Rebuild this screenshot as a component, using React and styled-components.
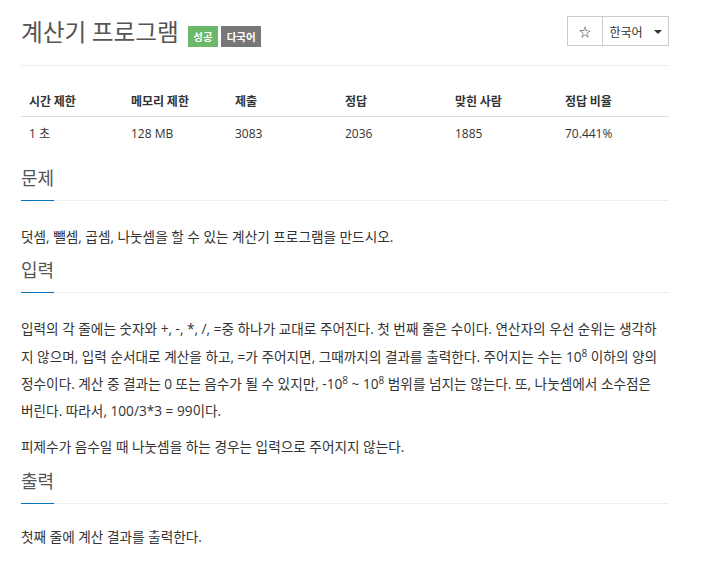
import React from "react";
import styled, { createGlobalStyle } from "styled-components";

const Global = createGlobalStyle`
  html, body { margin: 0; padding: 0; background: #fff; }
  body {
    font-family: "Open Sans", "Noto Sans CJK KR", sans-serif;
    color: #333;
    -webkit-font-smoothing: antialiased;
  }
`;

const Page = styled.div`
  width: 648px;
  padding: 0 0 0 21px;
`;

const Header = styled.header`
  display: flex;
  align-items: center;
  justify-content: space-between;
  height: 30px;
  padding: 16px 0 19px;
  border-bottom: 1px solid #eee;
`;

const TitleRow = styled.div`
  display: flex;
  align-items: center;
  gap: 3px;
`;

const Title = styled.h1`
  margin: 0 6px 0 0;
  font-family: "Noto Sans CJK KR", sans-serif;
  font-size: 23.7px;
  font-weight: 400;
  line-height: 30px;
  color: #555;
`;

const Badge = styled.span`
  display: inline-flex;
  align-items: center;
  box-sizing: border-box;
  height: 21px;
  margin-top: 11px;
  padding: 0 5.5px;
  font-family: "Noto Sans CJK KR", sans-serif;
  font-size: 10.5px;
  font-weight: 700;
  color: #fff;
  background: ${(p) => (p.$tone === "success" ? "#6ab86a" : "#777")};
`;

const BtnGroup = styled.div`
  display: flex;
  height: 30px;
`;

const Btn = styled.button`
  display: flex;
  align-items: center;
  justify-content: center;
  gap: 11px;
  box-sizing: border-box;
  width: ${(p) => p.$w}px;
  height: 30px;
  margin-left: -1px;
  padding: 0;
  border: 1px solid #ccc;
  background: #fff;
  font-family: "Noto Sans CJK KR", sans-serif;
  font-size: 12px;
  color: #333;
`;

const Caret = styled.span`
  width: 0;
  height: 0;
  border-left: 4px solid transparent;
  border-right: 4px solid transparent;
  border-top: 4px solid #333;
  margin-top: 1px;
`;

const Table = styled.table`
  width: 648px;
  margin: 17px 0 17px;
  border-collapse: collapse;
  table-layout: fixed;
  font-size: 12px;
  line-height: 17px;
`;

const Th = styled.th`
  box-sizing: border-box;
  width: ${(p) => p.$w}px;
  padding: 9px 8px 7px;
  text-align: left;
  font-family: "Noto Sans CJK KR", sans-serif;
  font-weight: 700;
  color: #333;
  border-bottom: 1px solid #ddd;
`;

const Td = styled.td`
  padding: 8px 8px;
  color: #333;
`;

const Section = styled.section`
  margin: 0;
`;

const Headline = styled.div`
  border-bottom: 1px dotted #ddd;
  margin-bottom: ${(p) => p.$gap || 22}px;
`;

const H2 = styled.h2`
  display: inline-block;
  margin: 0 0 -1px;
  padding: 0 0 13px;
  font-family: "Noto Sans CJK KR", sans-serif;
  font-size: 18px;
  font-weight: 400;
  line-height: 20px;
  color: #555;
  border-bottom: 1px solid #0076c0;
`;

const P = styled.p`
  margin: 0 0 9px;
  font-size: 13.65px;
  line-height: 27.3px;
  color: #333;
  sup {
    font-size: 10px;
    line-height: 0;
    vertical-align: 5px;
  }
`;

const stats = [
  ["시간 제한", "1 초", 102],
  ["메모리 제한", "128 MB", 104],
  ["제출", "3083", 110],
  ["정답", "2036", 110],
  ["맞힌 사람", "1885", 110],
  ["정답 비율", "70.441%", 112],
];

export default function App() {
  return (
    <>
      <Global />
      <Page>
        <Header>
          <TitleRow>
            <Title>계산기 프로그램</Title>
            <Badge $tone="success">성공</Badge>
            <Badge>다국어</Badge>
          </TitleRow>
          <BtnGroup>
            <Btn $w={36}>☆</Btn>
            <Btn $w={67}>
              한국어 <Caret />
            </Btn>
          </BtnGroup>
        </Header>

        <Table>
          <thead>
            <tr>
              {stats.map(([h, , w]) => (
                <Th key={h} $w={w}>
                  {h}
                </Th>
              ))}
            </tr>
          </thead>
          <tbody>
            <tr>
              {stats.map(([h, v]) => (
                <Td key={h}>{v}</Td>
              ))}
            </tr>
          </tbody>
        </Table>

        <Section>
          <Headline>
            <H2>문제</H2>
          </Headline>
          <P>덧셈, 뺄셈, 곱셈, 나눗셈을 할 수 있는 계산기 프로그램을 만드시오.</P>
        </Section>

        <Section>
          <Headline>
            <H2>입력</H2>
          </Headline>
          <P>
            입력의 각 줄에는 숫자와 +, -, *, /, =중 하나가 교대로 주어진다. 첫 번째 줄은 수이다. 연산자의 우선 순위는 생각하지 않으며, 입력 순서대로 계산을 하고, =가 주어지면, 그때까지의 결과를 출력한다. 주어지는 수는 10<sup>8</sup> 이하의 양의 정수이다. 계산 중 결과는 0 또는 음수가 될 수 있지만, -10<sup>8</sup> ~ 10<sup>8</sup> 범위를 넘지는 않는다. 또, 나눗셈에서 소수점은
            <br />
            버린다. 따라서, 100/3*3 = 99이다.
          </P>
          <P>피제수가 음수일 때 나눗셈을 하는 경우는 입력으로 주어지지 않는다.</P>
        </Section>

        <Section>
          <Headline $gap={19}>
            <H2>출력</H2>
          </Headline>
          <P>첫째 줄에 계산 결과를 출력한다.</P>
        </Section>
      </Page>
    </>
  );
}
